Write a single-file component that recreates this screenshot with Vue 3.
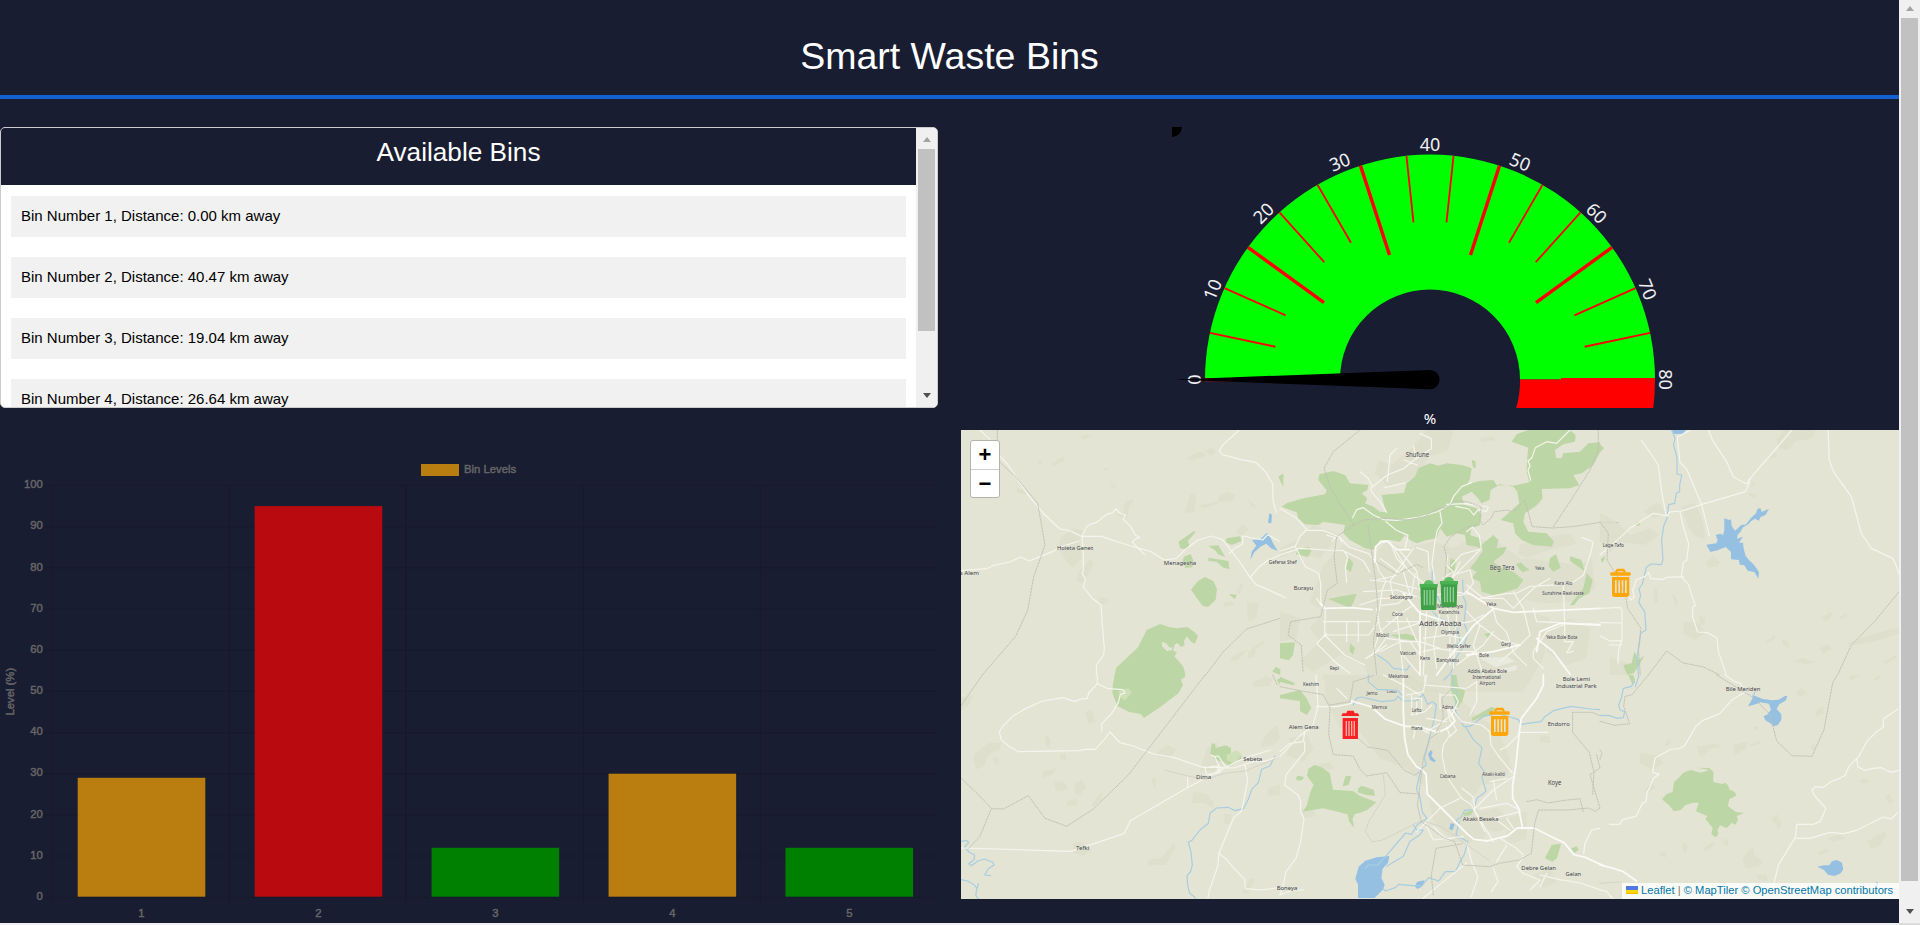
<script setup>
const bins = [
  { id: 1, km: '0.00', level: 29 },
  { id: 2, km: '40.47', level: 95 },
  { id: 3, km: '19.04', level: 12 },
  { id: 4, km: '26.64', level: 30 },
  { id: 5, km: '12.31', level: 12 }
]

// Gauge
const ticks = Array.from({ length: 16 }, (_, i) => ({ angle: i * 12, major: i % 3 === 0 }))
const gaugeLabels = Array.from({ length: 9 }, (_, i) => ({ text: i * 10, angle: i * 22.5 - 90 }))

// Bar chart
const colorFor = (level) => (level > 80 ? '#b90a0f' : level > 20 ? '#b97d10' : '#008000')
const yFor = (v) => 467.2 - v * 4.117
const xFor = (i) => 52.5 + i * 176.95
const levels = [0, 10, 20, 30, 40, 50, 60, 70, 80, 90, 100]

// Map artwork: six tiles, each drawn on a 960 x 750 grid
const tiles = [
  {
    x: 0, y: 0,
    shapes: [
      ['land', 'M360 35l25-8 12 6-28 8zM683 98l30-18 25 5-10 12-40 11zM735 78l20-10 15 10-18 15zM690 210l14-8 4 30-6 30-28 4 8-28zM775 215l25-14 25 8-8 20-40 2zM720 240l48-8 8 6-50 11zM865 225l20 15 2 10-15-8zM300 340l40-30 35 8-18 30 10 50-30 30-40-50zM355 440l40-40 5 20-30 55-20-10zM415 520l25-3 4 15-25 8zM835 310l15-12 18 14-20 18-18-4zM862 530l35 5-8 40-20 15-8-30zM790 535l25-8 8 14-30 4zM830 500l15-30 4 10-10 28zM812 700l30-20 20-5-28 30-20 4zM865 680l45-35 5 8-28 22-4 20-20 6zM170 190l25 5 5 14-30-6zM235 108h10v8h-12zM275 115l35-22 5 12-30 18-10-2zM452 178l15 2v10l-12-4zM433 128l10 2v8l-8-2zM470 270l20-10 5-30 28-8-15 22-8 40-20-10z'],
      ['green', 'M656 350l46-32 4 4-22 25 4 15-8 12-20-5zM800 340l40-6 5 14-30 12-17-8zM745 363l30-2 15 25 5 10-20-8-10-12zM745 398l60 10 3 24-18-4-20-18-25-2zM672 395l20-8 8 20-3 20-20 2-10-18zM735 456l25 12 11 24-4 32-23 22-17-4-34-48 20-25zM806 507l24 2-5 14zM560 615l40-18 30 10 20 3 32-4 20 14 12 12-10 25-12-8-12-15-8 14 2 12-10 6-12-12-8 5-5 18 12 5-8 12 26 30 5 15 2 16-15 10 4 10H460l8-46 66-62z'],
      ['green', 'M955 155l15-10v40zM937 740l10-15 14 8v17z'],
      ['cut', 'M606 650l12 5 12 14 8-3-3 10-15 2-14-14z'],
      ['water', 'M928 265l8 4-2 26-10-2zM876 345l25-2 20-20 8 10 12 25 12 20-20-8-14-14-16 8-20 18-12 22 4-24 14-18z'],
      ['road', 'M60 15l30 28M118 92l24 25 60 90 50 60 48 45 32 6 32 16 60 0 60 20 40 12 50 14 38 25 38-5 24-25 40-30 40-12 32 10 22 26 30 40 30 45 20 25 30 12 60 28M366 334l12-26 12-10 20-6 30-24 18-5 10-11 12 12 16 6-6 14 20 18 16 28 14 8-12 3-12 10 18 18 20 20M366 334l4 60v42l-4 10 10 15-6 25 25 32 28 22 4 60 6 70-2 20-22 30v30M3 437l78-6 20-10 48-10 34-15 24 12 70-28 20-12 60-20M838 15l-50 45-10 17 10 12 55 15 45 8 30 30 20 35 1 50 10 35M808 386l15-16 25-12v-25l60 12 15-16 35 20M870 458l30-35 25-18 35-15'],
      ['rail', 'M112 15v90l55 50 66 80 22 125-34 96-18 100-36 78-100 116M960 580l-100 32-68 66-55 72']
    ],
    labels: [[345, 374, 'Holeta Genet', 108, 16], [660, 419, 'Menagesha', 97, 16], [28, 450, 's Alem', 58, 15]]
  },
  {
    x: 960, y: 0,
    shapes: [
      ['land', 'M440 15h80l-15 60-60 20-30 60-90 30-40-40 10-40 40 15 60-50zM130 420l60-60 100 20 30-30 60 20 80-20 60 20 50-30 80 10 70 50 30 90-30 60 90 30-20 120-60 100H290l-40-80-70-30-80 50-40-30 60-60-30-40 40-50-40-30zM740 200l40-10 6 40-30 25-20-20zM720 360l50-20 100-14 20 30-60 12-90 30-25-10zM680 410l60-10 160 20 35-20 10 90-60 40-90 5-60-10zM180 330l-60 70-80-20-40 20v-30l60-30 40-40zM600 40l40-6 6 12-40 6zM800 600l70-20 60 30-10 90-60 20-60-40zM0 560l60 20-10 60-50 10z'],
      ['green', 'M5 245L20 235L70 220L135 208L140 196L115 165L118 148L160 138L195 150L210 175L265 180L262 195L245 205L262 220L255 235L280 245L300 260L320 262L312 240L305 210L372 204L380 175L405 155L415 130L450 115L475 122L500 115L545 120L575 130L570 160L562 178L600 168L640 165L650 180L700 182L748 172L740 140L742 95L745 68L695 50L710 28L745 15H870L887 30L885 50L850 58L825 75L828 98L845 100L850 85L900 80L925 55L960 52V82L940 120L905 145L880 150L898 180L870 190L785 192L788 220L770 240L735 265L730 290L745 320L800 325L822 350L815 365L760 360L725 345L705 325L700 295L662 285L690 260L718 235L712 200L700 185L660 178L632 195L628 225L605 235L590 215L575 200L545 215L555 240L590 250L605 270L600 300L575 310L570 330L600 340L605 360L640 330L655 345L650 370L680 365L672 385L640 410L665 430L700 440L730 465L712 490L680 500L640 510L605 500L600 470L575 460L590 440L570 430L590 405L610 375L590 365L560 360L555 330L530 325L500 335L480 310L470 340L440 345L410 355L390 345L375 330L360 350L330 345L300 345L280 375L255 370L210 345L190 325L195 300L130 290L115 300L75 298L55 280L50 262Z'],
      ['green', 'M575 105l12 4 0 20-8-2zM512 400l16 8-4 28-18 18zM145 522l40-8 45-8-8 22-10 20-30-10zM205 395l15 20-8 26-14-10zM52 372l36-6 6 12-10 18-36-8zM810 400l18-12 14 40-22 12-14-16zM870 394l34 10 10 34-14-10-30-20zM870 540l40-50 10-45 18 20-10 40-30 15-16 20zM708 418l14-6 12 12 14 10-20 8-10-10zM0 655l45-3-6 38-12 16-27-6zM210 655l15 14-6 20-10-10zM612 628l20-6-4 20zM330 630l50-4 30 10-6 10-40-4zM0 150l12 5-12 12z'],
      ['river', 'M458 432l-2 30 10 40 20 40M548 465l2 50 8 20-6 60 12 30-14 40-20 30-18 50-20 20M292 690l30 20 18 20 40 5 10-15M458 560l20 20 40 15 16 20 6 35-20 20'],
      ['road', 'M420 26l34 15v30l-22 14-30 20-30 25-50 20-50 40 4 12 26 30 18 30M240 140l24 20 12 22M350 70l-20 20-8 80M372 105l40 15M314 188l60-14M400 62l10 40M218 278l12-24 20-6 30 22 30 14 40 2 70-10 50-15 40-22 10-24 25-30 30-12M500 238l55-2 70 10-6 14-24-6-14 16-14-18-40-8M870 15l-40 40-30-5-34 18-10 30-12 10 6 14-6 14 8 30M318 290l30 25 36 16-10 44M480 260l6 35-14 20-8 40-8 60 8 50M0 250l50 30 30 34-20 20-14 30-46 14M80 316l50 0 48 20 28 30 60 20 22 28M0 390l60-20 80 5 50 2 60 30 20 35M46 365l30 60 40 20 6 30 0 60M190 375l14 22-8 30 4 45M288 410l10 30 20 26-12 30-8 60M330 350l20 50 50 50 40 30M345 375l30 48-30 30-50 10M360 378l50 60 10 60M410 368l34 12 4 60M300 400l60 45M400 370l-50 70-20 30 10 45 60 6M370 440l20 70M270 465l60 6 80 20M250 500l100-5 60 20M405 445l-10 60-40 30-50 6M504 390l-5 30 20 20-30 20M600 375l-60 60-40 40-10 60M560 320l18-14 20 26 6 40-60 16-30 35M520 450l50-15 10 40-30 35-60 5M540 410l-30 60 20 80M560 480l50 40 60 0 30 30 60-60 50-30M600 520l80-14 30-2 40-20 90-5 40-8 30-20 20-60 10-40-34-14M850 480l4 120 0 50M760 550l10 40 190 8M640 552l10 40 30 30 20 60 40 40M560 560l40 40 60 45 60 15M700 500l30 50 20 80-30 30-60 50M850 600l-50 20-40 60 0 20 30 30M854 650l26 0-14 24-6 10 20-5M440 560l-10 190M400 540l-30 20-70 60-20 60M400 520l-100 0-60 20M320 590l100 0M340 620l90-30M350 560l20 190M380 580l40 90M430 640l70-10 50 10M440 600l70 0 60-10 40-20M500 540l10 90 0 90M530 570l-10 160M480 560l-20 100 10 70M430 680l40-10 60 10 60 0M600 600l-20 60 30 90M640 620l-30 40-80 60M136 550l-2 80 60 60 60 30M130 590l140 0M136 630l130 0 30-40M140 625l-30 30 60 60 40 30M130 550l-20-30M290 550l10 60 18 30-30 40-30 20M200 590l0 60M235 590l0 60M300 680l60-30 60 0 60 20M260 700l60-40M155 350l20-20 10 20M140 330l30 10M420 520l100-20 60 10M360 680l60 70M320 640l70 10 30 40'],
      ['major', 'M285 410l2-45 16-14 18-3 30 26h38M122 535l14 15 80-2 60 6M370 505l50 60 80 25M420 560l0 190M560 500l80 50 60 12 260-12M770 680l10-60 60-25 120 5M770 640l50 40 50 68M640 552l-60 50-60 80-50 68M560 690l80-10 80-20'],
      ['rail', 'M240 15l-80 65-28 50 20 60 50 80 20 30M222 300l32-16 70-4 60 5 50-10 30-20 40-10 20-18 40 4 40 14-5 40 10 15 24-20 10-20 40-5 16 8 36-38 16 60 6 20 60 4 60-4 78-12 60 0M820 305l50-75 60-95 25-60v-60M220 300l-50 35-8 60 10 80-30 20-20 80-90 15-8 40 40 30 5 80M264 300l8 60 14 100 8 90-14 100 10 100M500 395l-6 70-20 10M500 395l-8-30 20-30 50-30 30-5M290 410l60 38 60-30 20 10'],
      ['landmark', 'M600 700l80-5 26 14-60 18zM630 740l80-20 0 14-60 16z']
    ],
    labels: [[412, 95, 'Shufune', 70, 17], [70, 495, 'Burayu', 58, 16], [8, 416, 'Gefersa Shef', 83, 12], [364, 522, 'Sebategna', 68, 12], [352, 574, 'Coca', 32, 12], [510, 550, 'Mararenyo', 78, 12], [507, 568, 'Kazanchis', 62, 12], [481, 602, 'Addis Ababa', 126, 21], [510, 628, 'Olympia', 54, 12], [536, 670, 'Wello Sefer', 72, 12], [307, 636, 'Mobil', 38, 12], [384, 690, 'Vatican', 48, 12], [435, 706, 'Kera', 30, 12], [503, 711, 'Bantyketu', 68, 12], [163, 734, 'Repi', 28, 12], [622, 744, 'Addis Ababa Bole', 118, 13], [666, 435, 'Beg Tera', 74, 17], [779, 436, 'Yeka', 28, 12], [850, 480, 'Kara Alo', 54, 12], [849, 511, 'Sunshine Real-state', 125, 13], [634, 542, 'Yeka', 30, 12], [678, 662, 'Gerji', 30, 12], [612, 697, 'Bole', 30, 12], [845, 643, 'Yeka Bole Bota', 94, 13]]
  },
  {
    x: 1920, y: 0,
    shapes: [
      ['land', 'M0 265l40 20 50 45 60-20 30 20-50 30-70-10-30 30-30-30zM130 260l40-30 30 35-40 15zM530 45l20-30h95l-10 25-50 10-20 25-30-5zM505 90l20-10 6 14-20 6zM245 245l40-12 25 60 5 50-30-10-20-30zM320 410l20-20 20 20-8 15-30 2zM160 490l10 0 5 40-12 4zM215 505l15 10 4 30-10-8zM455 174l12-2-4 10-10 3zM448 204l20 4-2 10-18-4zM250 590l50 5 15 30-30 20-35-20zM665 580l25-20 10 5-20 25zM720 575l20-10v12l-18 4zM495 650l30-20 0 12-20 12zM545 640l20 15 4 14-20-10zM578 708l30-8 40 10-30 8zM658 670l30-12 6 14-25 14zM740 655l60-22 70-20 28-4v16l-80 25-60 10zM850 710l38-20 4 8-35 20zM30 700l60 15-10 35H30zM300 570l15 10-3 20-15-10z'],
      ['green', 'M0 58l12 12-12 12zM106 295l12-6 2 10-10 4zM3 402l12-10-2 12-8 10zM70 720l25-5 8-35 14 25 16-14-12 24-20 30-18 5-8-16z'],
      ['water', 'M215 15h43l-10 11-25 1zM373 280l14 5 6-2 2 20 10 14 20-18 12 0 16-20 15-14 5-14 8-2 4 12 22-10-10 18-16 8-4 10-12-6-12 8-10 10-14 8-8 14-8 8-2 12 18-6-12 18 12 0 2 18 6 22 10 12 16 16 14 20-2 20-12-20-20-4-10-16-14-2-2-14-24-2v-22l-16-15-24 10-22 5-12-22 30-4 4-10-6-15 14-4 8 4 4-14z'],
      ['river', 'M215 15l10 24-4 20 10 40 0 48 14 3-6 30 0 20-10 5-5 30-18 4-5 40-10 25-6 40 4 60-5 15-30-2-15 10-12 50-10 15 5 20-6 20 18 28 4 55-16 10-5 40-6 30 5 60-10 30'],
      ['road', 'M123 45l22 30 30 45 10 80 12 65 6 8 5-12 38-3 60-20 130-38 10-20 2-20M0 390l30-25 60-55 70-45 45 8M325 15l15 35 40 60 20 45 40 22 20-28 70-80 45-54M272 15l-40 22 8 75 20 20 46 110 22 90M240 262l8 35 18 60-6 50-10 4-6 45 20 20 22 66-8 4 0 30 15 45 30 2 28 16 4 40 24 70M250 455l-50 2-8 6-40-2-6-18-12 12-26 10-5 20-6 10 6 20-10 10-16-25M684 15l4 90 12 35 54 75 30 110 30 45 64 30 10 20 10 30M0 550l60-3 6 8v90l-10 30-2 40M0 593l65 1M0 632l30 16 34-1M28 660h35'],
      ['rail', 'M0 290l25 35-4 80 35 55 22 60 5 30 40 60-8 60 6 80M897 500l-70 86-74 76-40 88M145 750l55-72 50 36 60 12 50 24']
    ],
    labels: [[40, 367, 'Lege Tafo', 64, 12]]
  },
  {
    x: 0, y: 750,
    shapes: [
      ['land', 'M375 110l20-5 10 35-20 8zM45 235l40-30 40-2-8 20-35 20-8 30-25 10-8-30zM100 245l18 6-6 20-10-10zM255 180l15 10 0 30-14-8zM282 320l30 0 12 22-35 6zM345 325l20-10 14 20-20 25-15-5zM320 380l30-10 0 22-30 2zM248 290l40-10-8 16-30 14zM395 390l30-40 0 22-25 24zM300 240l18-4 0 20-16 2zM575 310l14 0-2 30-12-15zM340 505l20-5 35 25-25 18-30-10zM562 555l40-5 40-45 4 10-30 55-50 0zM700 350l40 8 20 25 0 15-30-15-35 2zM590 235l30-25 28 12-18 30-40-10zM925 340l35-10v30l-35 2zM795 415l20 5-8 28-15-4zM870 610l15 5-20 40-20 0zM935 165l15-15 10 40-20 20-40 5 10-25zM740 220l30-20 20 70-30 20-40 0zM880 22l40-20 20 10-10 20-50 5zM3 70l40-12-15 30-25 20z'],
      ['green', 'M462 0h195l12 30-14 25-55 42-48 32-10-12-34-6-36-18-15-40 2-28 8-12zM755 205l10 2 2 12 30-8 16 8 0 18 20 2-10 10 20-10 2 15-20 10-16 10-20-14-20-4-18-20zM950 15l10-6v20z'],
      ['pale', 'M475 48l30-8 10 14-20 22-14-8zM800 240l30-14 15 12-20 26-25-8z'],
      ['river', 'M3 500l15-4 8 6-12 14 14 16 16 8-2 14-16 12 8 6 20-14 20-6 24 10 4 8-18 12-10 18 18 2M3 614l20 4 20 12 8 10-4 20 8 12M55 625l-5 20M945 243l-15 30-25 10-10 40-20 20-10 30-15 28-25 6-20-10-35 2-20 16-5 30-25 20-25 32-10 4 8 30 4 40-6 20-10 10 2 30 6 24 14 10 10 20'],
      ['road', 'M412 0v26l30 14 44 4M412 26l-26 28-4 16-20 2-18 8-36-12-60 10-50 22-40 24-30 30-10 18 6 22 22 20 30 16 180-3 20-4h30l24-26 20-26 30 32 40 10 60 24 60 10 90 30 32 0 60 2 60-20 30 0 42-12M425 168v-22l30-30 20-34 6-24 14-4-6-10M735 275l4 25 30-5 14-6-18-44-12-5M765 245l10-2 20 30M750 275l30-2-8 14M3 519l330 10 160-54 18-38 170-98 150-80 30-12 70-22M683 308v30M855 268l8 50-18 90-24 20-44 106-4 40-24 70-5 24M776 534l24 20 20 24 34 35 2 28 50 4 54-8'],
      ['rail', 'M3 92l64-92M735 0l-230 300-105 102-80 52-65-24-50-68-75 40-36-1-35 84-34 36M95 401l-40-42-52-50M938 0l14 30'],
      ['track', 'M615 285l60 16 60 12 60-18 60-7 100-40']
    ],
    labels: [[878, 258, 'Sebeta', 57, 16], [731, 312, 'Dima', 46, 16], [368, 525, 'Tefki', 40, 16]]
  },
  {
    x: 960, y: 750,
    shapes: [
      ['land', 'M130 0h260l60 40 80 20 60 60 60 40 40 90-20 70-60 0-40 60 60 60-20 60-90 0-60-60-20-100-60-60-80-30-60-80-60-10-40-80zM30 190l50-10 20 40-30 40-50-20zM60 400l40 4 10 20-40 6zM680 430l60-20 0 80-60 20zM610 250l60-10 25 40-30 40-60 10zM590 410l60-10 60 50-60 20-60-10zM110 270l40-10 10 20-30 10zM780 180l30 5 0 20-30-5zM760 600l50-20 20 40-40 20zM300 200l40 20 0 30-30-20z'],
      ['green', 'M103 270l20 6 26 18 10 50 60 4 20 14 50 20-26 22-24 10-14 2-8 16 6 24-6-4-10-14-4-20-30-8-44-10-60 10 12-20 10-40 10-20-20-28 4-20zM48 308l6-6 18 4-6 10-16 0zM196 304l18-2-8 28-18 4zM235 340l10-8 36 12 4 18-26-2-26-8zM795 550l20-40 28-4-12 44-14 10zM874 520l16-6 6 10-14 10zM0 5l45 20-5 6-40-10zM0 60l60-15 20 25 14 30-14 20-20-12 0-30-60-8zM575 130l60-35 10 5-14 20-34 10-20 8zM515 0l14 0 6 35 20 14-8 30-16 20-10-30-10-30zM550 415l35-12-14 18-18 2z'],
      ['water', 'M236 575l20-18 34-10 38-4-4 20-16 18-4 28 10 20-4 14-26 26h-50l0-40-8-18zM412 620l22-4-6 18-16 8-8-8zM452 226l6 4-4 14 14 14-6 4-12-8-6-16zM512 445l12 2-6 18-10-2z'],
      ['river', 'M220 90l10-20 14-4 60 14 40-4 10-12 15 14 40 0 20-20 14 30 14-8 12 10-6 40-10 40-20 80 6 20-16 12-14 60 10 20 8 50 14 18-30 20-16 28-18-4-60 70-24 26-28 0-10 10M265 0l0 20 28 24 20 0 40 2 14 16M515 0l4 30 10 20-2 60 24 44 20 0 40-30 40-8 40 10 24 8 8 14 60-8 10-14 30-20 50-12 60 8 26 2M556 154l24 40 26 24-10 48 16 22-6 20 12 40-10 10-16 10-12 36-26 2-10 20-16 10 6 14M538 440l-10 40 36 20-12 40-12 20-14 30-30 0-20 28-30-10-20 24-30 0-40-4-10 10-30 10-10-10M400 450l10 15 20 0-10 14-30 20-20 45-50 30'],
      ['road', 'M110 95h60l45-10 0-10M108 0l6 94-16 60-40 30-58 60M0 230l30-25 40-5 4-30M74 200l0 30-56 70-4 30 40 30 8 20 0 30 10 20-10 70-14 50-30 40-8 40-10 30M440 0l-10 50-50 10M435 0l0 30 120 10M395 60l0 60 40-10 20-20M400 70h25v30M410 80v40M480 55v45h50M485 60l40 0 10 20-20 40-40 30-40 20M500 155l10 30 20-20-20-30-10-40M510 180l-20 30-4 30 12 60 40 60 8 10M400 190l8-35 40 20M440 130l60 10M515 100l30 40 60 10 24 20 4 40 20 30 44 54M700 305l-60 40-60 60M720 175l-40 40-20 10M718 172h85M630 320l50-10M640 315l10 60M600 400l80-15 40 20M580 400l60 100M545 370l30 20 40 80M540 370l-60 30-70 70M640 430l80-20M680 430l20 30M650 435l40 30M585 405l-6-40-34-26M560 505l16 60 18 40-20 60M640 580l14 40-20 30M650 560l30-50M460 455l40 40 30-10M440 455l20 40 90-10M730 545l-20 30 20 20 50 20-30 30M800 595l-20 40M780 600l60 14 60 10 60 20M660 490l50 30 20 20M960 460l-25 5-20 40-4 30M0 660l40-15 30 0M430 670l60-50 70-56M170 40l30 30M310 0l60 30 50 30M560 40l30-20 0 60-20 40'],
      ['major', 'M215 78l60 18 40 36 60 22 40 0 60 18 30-14 20-20-20-36M370 0l0 110 4 80 10 50 26 35 14 8 14 14 4 60 60 60 60 60 20 16 40 5 60-15 30-24 50 0 60 30 30 14 30 36 34 8 54 25M790 0l0 30-20 40-46 60-6 40-10 100-10 60 0 40 18 30 12 60'],
      ['rail', 'M0 35l70 14 60 10 20 40-4 80 14 60 60 4 20 40 20 20 60-10 40 60 60 4M150 90l60-10 10-60 60-18M480 170l-30 20-20 60-10 80-8 60 12 50 70 50 30 10 24 70 80 5 30-10 60-10 36-20 10-90 12-40 90 0 60-6 20 10 14-10-30-100 30-20-10-40M460 660l-6-60 14-80 80-14M878 112l0 60 50 60 14 60-4 70M878 112l60 0 22 10M740 380l30-6 34 10 50-8 46-5 10 40M235 190l28 26 60 10 50 60 30 15 14-10M470 170l20-40-4-60 30-30'],
      ['track', 'M310 300l6 60-50 80-10 30 20 30 30-4 120-60 60 20 140 100']
    ],
    labels: [[93, 32, 'Keshim', 48, 12], [71, 161, 'Alem Gena', 90, 15], [276, 59, 'Jemo', 33, 12], [335, 54, 'Lebu', 30, 11], [355, 10, 'Mekanisa', 60, 12], [298, 101, 'Mernca', 46, 12], [410, 112, 'Lafto', 30, 13], [503, 101, 'Adina', 34, 12], [411, 165, 'Hana', 34, 13], [620, 11, 'International', 85, 13], [622, 29, 'Airport', 47, 13], [889, 17, 'Bole Lemi', 82, 16], [889, 40, 'Industrial Park', 122, 16], [836, 153, 'Endorro', 66, 15], [503, 308, 'Cabana', 48, 13], [641, 303, 'Akaki-kaliti', 68, 13], [824, 330, 'Koye', 40, 17], [602, 438, 'Akaki Beseka', 107, 15], [776, 585, 'Debre Gelan', 104, 16], [880, 602, 'Gelan', 47, 16], [21, 645, 'Boneya', 62, 16]]
  },
  {
    x: 1920, y: 750,
    shapes: [
      ['land', 'M120 235l50 5 20 25-30 20-40-20zM195 210l10-20 8 10-10 12zM290 215l60-10 10 8-30 10-25 24-8-10zM400 210l40-10 0 20-35 20zM450 210l30-14 0 10-30 10zM645 110l25-15 0 20-20 10zM585 55l20-15 15 15-20 10zM515 430l16-12 14 30-10 14zM470 600l28-2 4 20-26-4zM440 530l20-12 0 20 28 20-10 14-40 10-10-30zM800 500l50-30 10 10-20 30-25 12zM855 365l14-10 10 26-10 5zM780 315l25-5 0 12-20 4zM130 350l26-30 10 20-20 10zM370 490l14 5 0 18-12-5zM310 520l30-20 6 10-30 20zM680 490l40-10 20 10-40 10zM650 535l30-15 10 8-30 12zM250 500l14 15-10 20-10-20zM460 155l14 0 2 10-14-2zM750 0l30 0-30 20zM820 10l20-8 0 10-18 6zM630 220l10-15 10 10-8 12zM180 530l20 5 0 12-18-5z'],
      ['green', 'M292 278l36 1 12 12 0 30 26 6 10-4 8 8 4 12 16 8 6 10-22 12-4 20 12 10 12 8 24 3-22 9 4 12-8 14-10-6-16 16-20-8-8 14 4 12-10 10-12-10 4-18-14-18-8-8 6-10-34-14 8-26-18 0-22 8-14 14-20 4-16-20-20-16 14-16 18-6 4-30 16-14 12-14 22-8 30 8 26-8zM85 0l14 0 6 14-8 14z'],
      ['water', 'M444 94l14-24 0-10 30 12 28 4 20-2 20-12 6 2-4 12-20 12-8 14 14 16 0 16-10 16-14 4-10-10-14-8-5-12 12-6 10-14-6-18-26-4-14 6zM652 575l20-4 16 0 8-12 14-4 16 8 4 20-8 12-18 8-20-4-12-14zM828 622h6v14h-8z'],
      ['river', 'M104 20l-10 14-24 6-6 30-8 20 4 14 14 6-4 18-20 2-20-8-30-1M465 50l-6 14'],
      ['road', 'M375 0l30 20 16 5 14 26-40 25-36 40-50 20-20 16-35 60-20 10-20 0-48 26-4 18-4 26 20 6-18 12-10 25-8 15-4 30-10 4-20 40-40 10-10 14-30 0M894 102l-44 30 0 24-20 14-30 30-24 45-30 30-10 26-20 10-24 10-22 16-24-2-10 10 6 15 36 40-18 40-20 8-50 0-4 40-50 80-15 60M770 250l4 26 20 10 24-6 26-2 28 14 24-6M590 490l40 0 60-18 40 4 40-10 80-40 24 6 20-20'],
      ['major', 'M0 570l40 10 30 10 40 28'],
      ['rail', 'M350 0l110 68 50 50 20 80 46 44 60 2 36-80 26-140 14-24M145 0l-50 60-20 4-4 30 18 52-44 5-45-12M0 225l6 10-6 18'],
      ['road', 'M0 645l20 4 20 25'],
      ['track', 'M0 625l60-4']
    ],
    labels: [[429, 47, 'Bile Meriden', 104, 15]]
  }
]
const orangeBins = [[649, 138.3], [528, 277.3]]
const greenBins = [[458.7, 150], [479, 147]]
</script>

<template>
  <div class="window">
    <main class="page">
      <header class="title"><h1>Smart Waste Bins</h1></header>
      <div class="dashboard">
        <section class="card">
          <div class="card-body">
            <h2>Available Bins</h2>
            <ul>
              <li v-for="b in bins" :key="b.id">Bin Number {{ b.id }}, Distance: {{ b.km }} km away</li>
            </ul>
          </div>
          <div class="scrollbar inner">
            <i class="arrow up"></i><i class="thumb"></i><i class="arrow down"></i>
          </div>
        </section>

        <section class="gauge">
          <svg width="516" height="281" viewBox="0 0 516 281">
            <circle cx="0" cy="0" r="10" />
            <path d="M33 252.6A225 225 0 0 1 483 252.6H348A90 90 0 0 0 168 252.6Z" fill="#0f0" />
            <path d="M483 252.6A225 225 0 0 1 450 370L320 320A90 90 0 0 0 348 252.6Z" fill="#f00" />
            <line v-for="t in ticks" :key="t.angle" x1="33" y1="252.6" :x2="t.major ? 127 : 100" y2="252.6" stroke="#f00" :stroke-width="t.major ? 3.4 : 1.8" :transform="`rotate(${t.angle} 258 252.6)`" />
            <text v-for="l in gaugeLabels" :key="l.text" x="258" y="23.6" :transform="`rotate(${l.angle} 258 252.6)`" class="gauge-label">{{ l.text }}</text>
            <path d="M5 252.4L258 243A9.6 9.6 0 0 1 258 262.2L5 252.8Z" />
          </svg>
          <span>%</span>
        </section>

        <section class="chart">
          <svg width="938" height="493" viewBox="0 0 938 493">
            <g stroke="#161a2b">
              <line v-for="v in levels" :key="v" x1="43" x2="937" :y1="yFor(v)" :y2="yFor(v)" />
              <line v-for="i in 5" :key="i" :x1="xFor(i - 1)" :x2="xFor(i - 1)" y1="55" y2="473" />
            </g>
            <rect x="421" y="34" width="38" height="12" fill="#b97d10" />
            <g class="chart-text">
              <text x="464" y="43">Bin Levels</text>
              <text v-for="v in levels" :key="v" x="42.8" :y="yFor(v) + 2.8" text-anchor="end">{{ v }}</text>
              <text v-for="(b, i) in bins" :key="b.id" :x="141.5 + i * 176.95" y="487" text-anchor="middle">{{ b.id }}</text>
              <text transform="translate(14.2 261.7) rotate(-90)" text-anchor="middle">Level (%)</text>
            </g>
            <rect v-for="(b, i) in bins" :key="b.id" :x="77.7 + i * 176.95" :y="yFor(b.level)" width="127.6" :height="b.level * 4.117 - 0.5" :fill="colorFor(b.level)" />
          </svg>
        </section>

        <section class="map">
          <svg class="map-art" width="938" height="469" viewBox="0 0 938 469">
            <rect width="938" height="469" fill="#e3e4d4" />
            <g transform="translate(-1 -5) scale(0.33333)">
              <g v-for="(t, n) in tiles" :key="n" :transform="`translate(${t.x} ${t.y})`">
                <path v-for="(s, k) in t.shapes" :key="k" :class="s[0]" :d="s[1]" />
              </g>
              <g v-for="(t, n) in tiles" :key="'l' + n" :transform="`translate(${t.x} ${t.y})`" class="places">
                <text v-for="(l, k) in t.labels" :key="k" :x="l[0]" :y="l[1]" :font-size="l[4] * 1.12" :textLength="l[3]" lengthAdjust="spacingAndGlyphs">{{ l[2] }}</text>
              </g>
            </g>
            <g v-for="(p, n) in greenBins" :key="'g' + n" :transform="`translate(${p[0]} ${p[1]}) scale(0.3333)`">
              <path d="M12 12Q16 0 27 0T42 12Z" fill="#62bd66" />
              <path d="M2 20H52L50 86Q49 90 45 90H8Q4 90 4 86Z" fill="#3fa047" />
              <path d="M0 12H54V22H0Z" fill="#4bb252" />
              <path d="M14 30V76M22 30V76M31 30V76M40 30V76" stroke="#92cf98" stroke-width="4" />
            </g>
            <g v-for="(p, n) in orangeBins" :key="'o' + n" :transform="`translate(${p[0]} ${p[1]}) scale(0.3333)`" fill="#ffa60a">
              <path d="M18 12L22 5H41L45 12" fill="none" stroke="#ffa60a" stroke-width="7" stroke-linejoin="round" />
              <rect x="1" y="12" width="61" height="10" rx="3" />
              <path fill-rule="evenodd" d="M6 26H58V78Q58 86 50 86H14Q6 86 6 78ZM15 36V74H20V36ZM25 36V74H30V36ZM35 36V74H40V36ZM45 36V74H50V36Z" />
            </g>
            <g transform="translate(380.3 280.7) scale(0.3333)" fill="#fb2024">
              <path d="M15 8L18 0H37L40 8H50L54 16H0L4 8Z" />
              <path d="M4 22H50V85H4Z" />
              <path d="M15 31V76M23 31V76M31 31V76M39 31V76" stroke="#f4b5aa" stroke-width="4" />
            </g>
          </svg>
          <div class="zoom"><b>+</b><b>−</b></div>
          <div class="credit">
            <svg width="12" height="8" viewBox="0 0 12 8"><path d="M0 0h12v4H0z" fill="#4c7be1" /><path d="M0 4h12v3H0z" fill="#ffd500" /><path d="M0 7h12v1H0z" fill="#e0bc00" /></svg>
            <a>Leaflet</a> <em>|</em> <a>© MapTiler</a> <a>© OpenStreetMap contributors</a>
          </div>
        </section>
      </div>
    </main>
    <div class="scrollbar outer">
      <i class="arrow up"></i><i class="thumb"></i><i class="arrow down"></i>
    </div>
    <div class="hbar"></div>
    <div class="corner"></div>
  </div>
</template>

<style>
body { margin: 0; overflow: hidden; background: #191d32; }
</style>

<style scoped>
.window {
  display: grid;
  grid-template: 923px 2px / 1899px 21px;
  width: 1920px;
  height: 925px;
  overflow: hidden;
  background: #191d32;
  font-family: "Liberation Sans", Arial, sans-serif;
}
.page { overflow: hidden; }
.title {
  box-sizing: border-box;
  height: 99px;
  border-bottom: 4px solid #1260d2;
  text-align: center;
}
h1, h2 { margin: 0; font-weight: 400; color: #fff; }
h1 { padding-top: 36px; font-size: 37.5px; line-height: 41px; }
.dashboard {
  display: grid;
  grid-template: 303px 493px / 938px 938px;
  column-gap: 23px;
  padding-top: 28px;
}
.card {
  box-sizing: border-box;
  display: flex;
  height: 281px;
  border: 1px solid #ccc;
  border-radius: 5px;
  overflow: hidden;
  background: #fff;
}
.card-body { flex: 1; overflow: hidden; }
h2 {
  box-sizing: border-box;
  height: 57px;
  padding-top: 9px;
  background: #191d32;
  font-size: 26.2px;
  line-height: 30px;
  text-align: center;
}
ul {
  display: flex;
  flex-direction: column;
  gap: 20px;
  margin: 0;
  padding: 11px 10px;
  list-style: none;
}
li {
  box-sizing: border-box;
  flex: none;
  height: 41px;
  padding: 10px;
  background: #f1f1f1;
  color: #000;
  font-size: 15px;
  line-height: 20px;
}
.scrollbar {
  display: flex;
  flex-direction: column;
  align-items: center;
  width: 21px;
  background: #f0f0f0;
}
.arrow { width: 0; height: 0; border: 4.5px solid transparent; }
.arrow.up { border-top: 0; border-bottom: 5px solid #a3a3a3; }
.arrow.down { margin-top: auto; border-bottom: 0; border-top: 5px solid #505050; }
.thumb { width: 17px; background: #c1c1c1; }
.inner .up { margin: 9px 0 7px; }
.inner .thumb { height: 182px; }
.inner .down { margin-bottom: 9px; }
.outer .up { margin: 6px 0 7px; }
.outer .thumb { height: 863px; }
.outer .down { margin-bottom: 9px; }
.hbar { background: #f0f0f0; }
.corner { background: #dcdcdc; }
.gauge {
  display: flex;
  flex-direction: column;
  align-items: center;
  color: #fff;
  font: 15px/20px "Noto Sans", sans-serif;
}
.gauge svg { display: block; }
.gauge-label { fill: #f0f0f2; font: 18px "Noto Sans", sans-serif; text-anchor: middle; }
.chart svg { display: block; }
.chart-text { fill: #666; font-size: 11.3px; stroke: #666; stroke-width: 0.45px; }
.map { position: relative; height: 469px; overflow: hidden; }
.map-art { display: block; }
.land { fill: #dcddca; opacity: 0.75; }
.green { fill: #bdd6a5; }
.pale { fill: #cfe0b9; }
.cut { fill: #e3e4d4; }
.water { fill: #95c0e2; }
.landmark { fill: #eeeee6; opacity: 0.7; }
.river, .road, .major, .rail, .track { fill: none; stroke-linejoin: round; stroke-linecap: round; }
.river { stroke: #a8cde2; stroke-width: 3.5; }
.road { stroke: #f5f5ee; stroke-width: 3.6; }
.major { stroke: #fafaf6; stroke-width: 5.4; }
.rail { stroke: #bfc0b6; stroke-width: 2.8; stroke-dasharray: 5 4; }
.track { stroke: #d0d1c5; stroke-width: 2.5; }
.places {
  fill: #3c3d46;
  font-family: "Noto Sans", sans-serif;
  text-anchor: middle;
  paint-order: stroke;
  stroke: #e9e9de;
  stroke-width: 1.5px;
}
.zoom {
  position: absolute;
  top: 10px;
  left: 9px;
  box-sizing: border-box;
  display: flex;
  flex-direction: column;
  width: 30px;
  height: 58px;
  border: 1px solid #b4b5a8;
  border-radius: 3px;
  background: #fff;
}
.zoom b {
  flex: 1;
  color: #000;
  font: bold 22px/27px "Liberation Sans", Arial, sans-serif;
  text-align: center;
}
.zoom b + b { border-top: 1px solid #ccc; }
.credit {
  position: absolute;
  right: 0;
  bottom: 0;
  box-sizing: border-box;
  width: 277px;
  height: 16px;
  padding: 0 5px 0 4px;
  background: rgba(255, 255, 255, 0.8);
  font-size: 11.2px;
  line-height: 15px;
  white-space: nowrap;
}
.credit svg { margin-right: 3px; }
.credit a { color: #0078a8; }
.credit em { color: #777; font-style: normal; }
</style>
